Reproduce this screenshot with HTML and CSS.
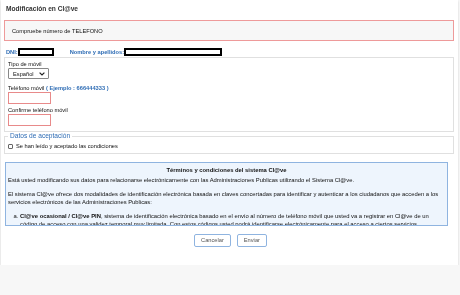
FILE: index.html
```html
<!DOCTYPE html>
<html lang="es">
<head>
    <meta charset="UTF-8">
    <title>Modificación en Cl@ve</title>
    <link rel="stylesheet" href="styles.css">
</head>
<body>
    <div class="container">
        <h1>Modificación en Cl@ve</h1>
        <div class="alert">Compruebe número de TELEFONO</div>

        <div class="ident">
            <span class="ident-label">DNI:</span><span class="masked dni"></span>
            <span class="ident-label nombre">Nombre y apellidos:</span><span class="masked name"></span>
        </div>

        <div class="panel">
            <label for="tipo">Tipo de móvil</label>
            <div class="select-wrap">
                <select id="tipo" name="tipo">
                    <option>Español</option>
                </select>
                <svg class="chevron" width="6" height="4" viewBox="0 0 6 4"><path d="M0.6 0.6 L3 3 L5.4 0.6" fill="none" stroke="#222" stroke-width="1.2"/></svg>
            </div>

            <label for="telefono" class="gap">Teléfono móvil <span class="hint">( Ejemplo : 666444333 )</span></label>
            <input type="text" id="telefono" class="error">

            <label for="confirm" class="gap second">Confirme teléfono móvil</label>
            <input type="text" id="confirm" class="error">
        </div>

        <fieldset class="accept">
            <legend>Datos de aceptación</legend>
            <label class="check"><input type="checkbox"> Se han leído y aceptado las condiciones</label>
        </fieldset>

        <div class="terms">
            <h2>Términos y condiciones del sistema Cl@ve</h2>
            <p>Está usted modificando sus datos para relacionarse electrónicamente con las Administraciones Publicas utilizando el Sistema Cl@ve.</p>
            <p>El sistema Cl@ve ofrece dos modalidades de identificación electrónica basada en claves concertadas para identificar y autenticar a los ciudadanos que acceden a los servicios electrónicos de las Administraciones Publicas:</p>
            <ol type="a">
                <li><b>Cl@ve ocasional / Cl@ve PIN</b>, sistema de identificación electrónica basado en el envío al número de teléfono móvil que usted va a registrar en Cl@ve de un código de acceso con una validez temporal muy limitada. Con estos códigos usted podrá identificarse electrónicamente para el acceso a ciertos servicios electrónicos de las Administraciones Publicas.</li>
                <li><b>Cl@ve permanente</b>, sistema de identificación electrónica basado en el uso de una contraseña de acceso establecida por el usuario.</li>
            </ol>
        </div>

        <div class="actions">
            <button type="button">Cancelar</button>
            <button type="submit">Enviar</button>
        </div>
    </div>
</body>
</html>
```

FILE: styles.css
```css
body {
    font-family: "Liberation Sans", Arial, sans-serif;
    font-size: 5.7px;
    line-height: 8px;
    color: #111;
    background-color: #f7f7f7;
    margin: 0;
}

.container {
    background: #fff;
    margin: 0 2px 0 1px;
    padding: 5px 3px 18px 3px;
    box-shadow: 0 1px 2px rgba(0, 0, 0, 0.15);
}

h1 {
    font-size: 6.6px;
    line-height: 8px;
    font-weight: bold;
    color: #333;
    margin: 0 0 7px 2px;
}

.alert {
    border: 1px solid #ee9a9a;
    background: #f7f7f7;
    padding: 6px 7px 5px 7px;
    margin-right: 1px;
}

.ident {
    display: flex;
    align-items: center;
    height: 10px;
    margin-top: 6px;
    padding-left: 2px;
}

.ident-label {
    color: #2f6db5;
    font-weight: bold;
}

.nombre {
    margin-left: 16px;
}

.masked {
    display: inline-block;
    height: 4px;
    border: 2px solid #000;
    background: #fff;
}

.dni {
    width: 32px;
}

.name {
    width: 94px;
}

.panel {
    margin: 0 1px 0 0;
    border: 1px solid #e0e0e0;
    padding: 2px 3px 5px 3px;
    display: flex;
    flex-direction: column;
    align-items: flex-start;
}

.panel label.gap {
    margin-top: 5px;
}

.panel label.second {
    margin-top: 2px;
}

.hint {
    color: #2f6db5;
    font-weight: bold;
}

.select-wrap {
    position: relative;
    width: 41px;
    height: 11px;
}

select {
    appearance: none;
    font-family: inherit;
    font-size: 5.7px;
    color: #111;
    height: 11px;
    width: 41px;
    padding: 0 0 0 4px;
    margin: 0;
    border: 1px solid #888;
    border-radius: 1px;
    background: #fff;
}

.chevron {
    position: absolute;
    right: 4px;
    top: 4px;
    pointer-events: none;
}

input.error {
    width: 43px;
    height: 12px;
    box-sizing: border-box;
    padding: 0;
    border: 1px solid #e88a8a;
    margin: 0;
}

.accept {
    margin: 0 1px 0 0;
    border: 1px solid #e0e0e0;
    padding: 0 3px 3px 3px;
}

.accept legend {
    color: #2f6db5;
    font-size: 6.6px;
    line-height: 8px;
    padding: 0 2px;
}

.check {
    display: flex;
    align-items: center;
    gap: 3px;
    margin-top: 2px;
}

.check input {
    appearance: none;
    margin: 0;
    width: 5px;
    height: 5px;
    border: 1px solid #666;
    border-radius: 1px;
    background: #fff;
}

.terms {
    font-size: 5.85px;
    margin: 8px 7px 0 1px;
    height: 62px;
    overflow-y: scroll;
    border: 1px solid #8fb4e0;
    background: #eef5fd;
    padding: 0 2px;
}

.terms::-webkit-scrollbar {
    width: 7px;
}

.terms::-webkit-scrollbar-track {
    background: #f1f1f1;
}

.terms::-webkit-scrollbar-thumb {
    background: #c1c1c1;
}

.terms::-webkit-scrollbar-button:single-button {
    display: block;
    height: 7px;
    background-color: #f1f1f1;
}

.terms::-webkit-scrollbar-button:single-button:vertical:decrement {
    background-image: conic-gradient(from 150deg at 50% 35%, #666 0 60deg, transparent 60deg);
    background-size: 100% 65%;
    background-repeat: no-repeat;
}

.terms::-webkit-scrollbar-button:single-button:vertical:increment {
    background-image: conic-gradient(from -30deg at 50% 65%, #666 0 60deg, transparent 60deg);
    background-size: 100% 100%;
    background-repeat: no-repeat;
    background-clip: content-box;
    padding-top: 2px;
}

.terms h2 {
    font-size: 5.85px;
    line-height: 8px;
    text-align: center;
    margin: 3px 0 2px 0;
}

.terms p {
    margin: 0 0 6px 0;
}

.terms ol {
    margin: 0;
    padding-left: 12px;
}

.actions {
    display: flex;
    justify-content: center;
    gap: 6px;
    margin-top: 8px;
    padding-left: 2px;
}

button {
    font-family: inherit;
    font-size: 5.7px;
    color: #555;
    background: #fff;
    border: 1px solid #8fb4e0;
    border-radius: 2px;
    padding: 0 6px;
    height: 13px;
    line-height: 11px;
}
```
